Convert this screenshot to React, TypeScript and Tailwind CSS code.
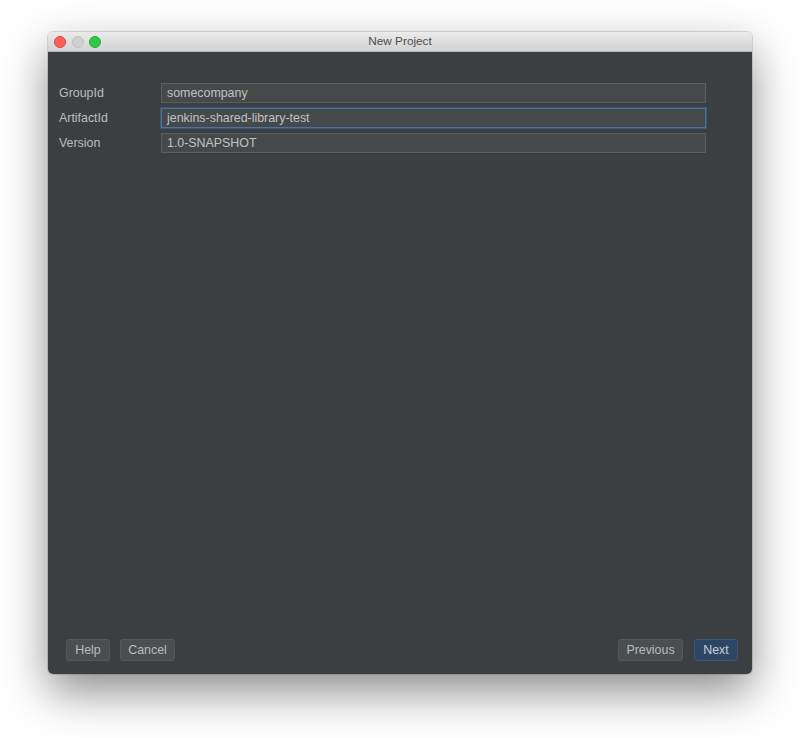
import React from "react";

const font = { fontFamily: '"Liberation Sans", Arial, sans-serif' };

function Field({ label, value, focused }: { label: string; value: string; focused?: boolean }) {
  return (
    <div className="flex items-center h-[20px]">
      <div className="w-[102px] text-[12.4px] text-[#bcbcbc]">{label}</div>
      <div
        className={
          "flex-1 h-[20px] flex items-center px-[5px] text-[12.4px] text-[#c2c2c2] bg-[#45494a] border " +
          (focused ? "border-[#4a74a0] shadow-[0_0_0_1px_#3a5878]" : "border-[#5b5e60]")
        }
      >
        {value}
      </div>
    </div>
  );
}

function Btn({ children, primary, w }: { children: React.ReactNode; primary?: boolean; w: string }) {
  return (
    <div
      className={
        "h-[22px] flex items-center justify-center rounded-[3px] text-[12.4px] border " +
        w +
        " " +
        (primary
          ? "bg-[#2e4666] border-[#3e5675] text-[#c8cfd8]"
          : "bg-[#4a4e50] border-[#54585a] text-[#bbbbbb]")
      }
    >
      {children}
    </div>
  );
}

export default function App() {
  return (
    <div className="w-[800px] h-[738px] bg-white pt-[32px] pl-[48px]" style={font}>
      <div className="w-[704px] h-[642px] flex flex-col rounded-[5px] overflow-hidden shadow-[0_18px_45px_rgba(0,0,0,0.45),0_0_0_1px_rgba(0,0,0,0.12)]">
        <div className="relative h-[20px] flex items-center justify-center bg-gradient-to-b from-[#ebebeb] to-[#d2d2d2] border-b border-[#b4b4b4]">
          <div className="absolute left-[6px] top-[4px] flex gap-[5.5px]">
            <div className="w-[12px] h-[12px] rounded-full bg-[#fc5f57] border border-[#e0443e]" />
            <div className="w-[12px] h-[12px] rounded-full bg-[#d0d0d0] border border-[#c0c0c0]" />
            <div className="w-[12px] h-[12px] rounded-full bg-[#34c84a] border border-[#27aa35]" />
          </div>
          <div className="text-[11.8px] text-[#4d4d4d]">New Project</div>
        </div>
        <div className="flex-1 bg-[#3c3f41] flex flex-col">
          <div className="pt-[31px] pl-[11px] pr-[46px] flex flex-col gap-[5px]">
            <Field label="GroupId" value="somecompany" />
            <Field label="ArtifactId" value="jenkins-shared-library-test" focused />
            <Field label="Version" value="1.0-SNAPSHOT" />
          </div>
          <div className="flex-1" />
          <div className="flex items-center pl-[18px] pr-[14px] pb-[13px]">
            <div className="flex gap-[10px]">
              <Btn w="w-[44px]">Help</Btn>
              <Btn w="w-[55px]">Cancel</Btn>
            </div>
            <div className="flex-1" />
            <div className="flex gap-[11px]">
              <Btn w="w-[65px]">Previous</Btn>
              <Btn w="w-[44px]" primary>Next</Btn>
            </div>
          </div>
        </div>
      </div>
    </div>
  );
}
